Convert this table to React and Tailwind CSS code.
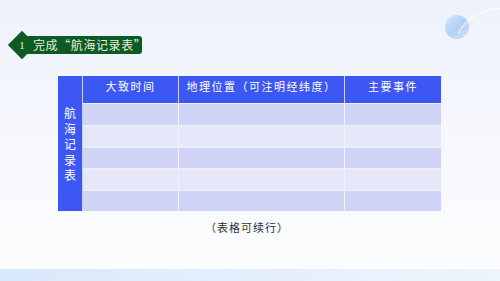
const rows = [0, 1, 2, 3, 4];
const rowHeights = ['h-[22px]', 'h-[22px]', 'h-[21px]', 'h-[22px]', 'h-[21px]'];

const App = () => {
    return (
        <div
            className="relative w-[500px] h-[281px] overflow-hidden bg-gradient-to-b from-[#edf2fb] via-[#f6f8fd] to-[#fdfdfe] flex flex-col"
            style={{ fontFamily: '"Noto Sans CJK SC", "Noto Sans", sans-serif' }}
        >
            {/* decorative bubble */}
            <div className="absolute left-[445px] top-[15px] w-[24px] h-[24px] rounded-full bg-gradient-to-br from-[#d6e6fb] via-[#a9cdf6] to-[#cfe2fa] opacity-90" />
            <svg className="absolute left-[440px] top-0" width="60" height="50" viewBox="0 0 60 50">
                <path d="M18 34 C 26 18, 40 10, 60 8" fill="none" stroke="#ffffff" strokeWidth="1.2" opacity="0.8" />
            </svg>

            {/* title */}
            <div className="relative mt-[36px] ml-[25px] h-[18px] w-[117px] bg-[#0d5a23] rounded-r-[3px] flex items-center pl-[8px]">
                <div className="absolute left-[-17px] top-[-5px] w-[28px] h-[28px] flex items-center justify-center">
                    <div className="w-[20px] h-[20px] bg-[#0d5a23] rotate-45" />
                    <span className="absolute text-[11px] text-[#e8eee0] leading-none" style={{ fontFamily: '"Liberation Serif", serif' }}>1</span>
                </div>
                <span className="text-[12px] text-[#e9efe2] leading-none whitespace-nowrap tracking-[0.6px]">完成“航海记录表”</span>
            </div>

            {/* table */}
            <div className="mt-[22px] ml-[58px] w-[383px] grid grid-cols-[25px_96px_166px_96px] text-white text-[11px]">
                <div className="row-span-6 bg-[#3c57f2] border-r border-[#c9d0f8] flex flex-col items-center justify-center gap-[1px] pt-[2px]">
                    {['航', '海', '记', '录', '表'].map((c) => (
                        <span key={c} className="text-[12px] leading-[14.5px]">{c}</span>
                    ))}
                </div>
                <div className="h-[27px] bg-[#3c57f2] border-r border-[#c9d0f8] flex justify-center pt-[2px] tracking-[1.5px]">大致时间</div>
                <div className="h-[27px] bg-[#3c57f2] border-r border-[#c9d0f8] flex justify-center pt-[2px] tracking-[1.5px]">地理位置（可注明经纬度）</div>
                <div className="h-[27px] bg-[#3c57f2] flex justify-center pt-[2px] tracking-[1.5px]">主要事件</div>
                {rows.map((r) => {
                    const bg = r % 2 === 0 ? 'bg-[#cfd3f6]' : 'bg-[#e6e8fa]';
                    return [0, 1, 2].map((c) => (
                        <div
                            key={`${r}-${c}`}
                            className={`${rowHeights[r]} ${bg} border-t border-[#eef0fc] ${c < 2 ? 'border-r' : ''} border-r-[#eef0fc]`}
                        />
                    ));
                })}
            </div>

            {/* caption */}
            <div className="mt-[11px] ml-[205px] text-[11px] text-[#333333] tracking-[1px] leading-none">（表格可续行）</div>

            {/* bottom band */}
            <div className="mt-auto h-[12px] bg-gradient-to-r from-[#d9e8fb] via-[#e4effc] to-[#eef4fd]" />
        </div>
    );
};

export default App;
